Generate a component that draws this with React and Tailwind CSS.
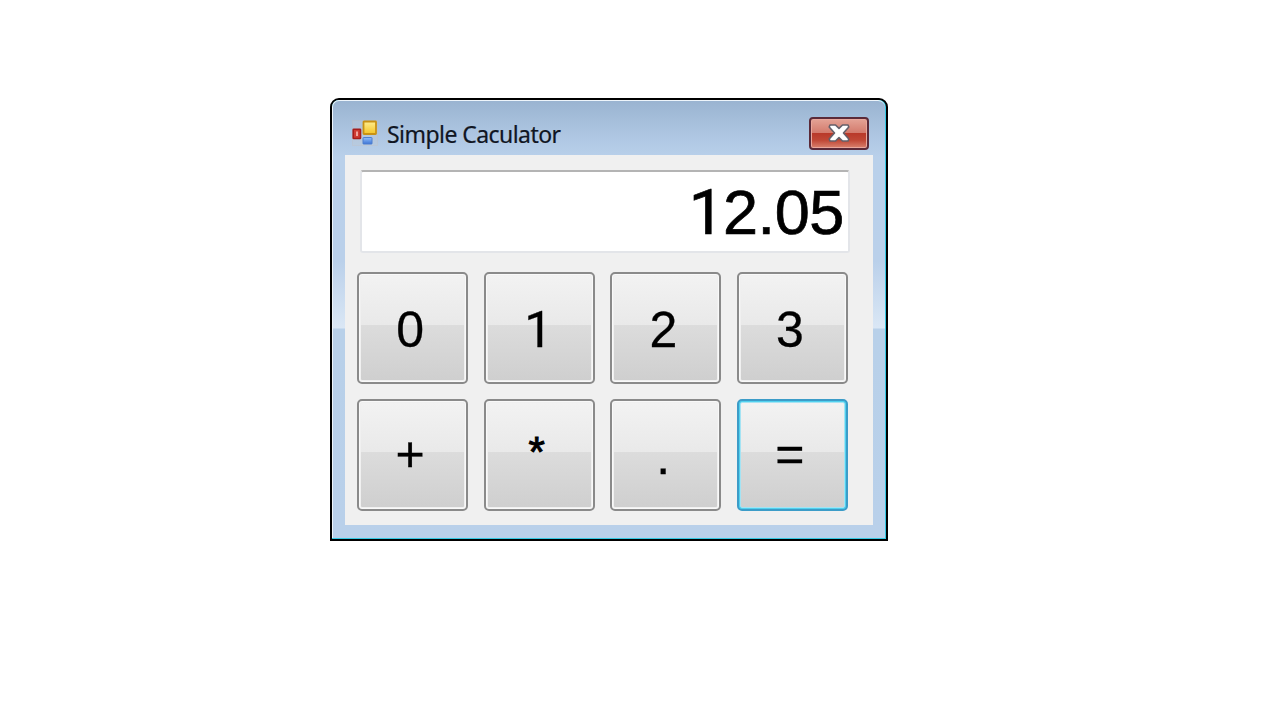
const ARIAL = "font-['Liberation_Sans',Arial,sans-serif]";

function Digits({ value }) {
  return value.split("").map((c, i) =>
    c === "1" ? (
      <span key={i} className="pl-[2px] font-[Roboto,sans-serif] leading-none tracking-[-0.02em]">{c}</span>
    ) : (
      <span key={i}>{c}</span>
    )
  );
}

const NUDGE = {
  "+": "pb-[3px] pt-0",
  "=": "pb-[3px] pt-0",
  ".": "pb-0 pt-[3px]",
  "*": "pb-[6px] pt-0",
};

function Key({ label, focused = false }) {
  return (
    <button
      className={
        "h-[112px] rounded-[5px] border-2 p-px " +
        (focused
          ? "border-[#3c9cc8] bg-[#50d0ee]"
          : "border-[#8a8a8a] bg-[#f9f9f9]")
      }
    >
      <span
        className={
          "flex h-full w-full items-center justify-center rounded-[2px] border pr-[5px] leading-none text-black bg-[linear-gradient(to_bottom,#f2f2f2_0%,#e9e9e9_47%,#dcdcdc_47%,#cfcfcf_100%)] " +
          (label === "*"
            ? "text-[42px] [-webkit-text-stroke:1px_black] "
            : "text-[50px] [-webkit-text-stroke:0.3px_black] ") +
          (NUDGE[label] || "pt-[3px]") +
          (focused ? " border-[#a5e3f3] " : " border-[#f0f0f0] ") +
          ARIAL
        }
      >
        <Digits value={label} />
      </span>
    </button>
  );
}

function AppIcon() {
  return (
    <svg width="26" height="26" viewBox="0 0 26 26" className="shrink-0">
      <defs>
        <linearGradient id="yellow" x2="0" y2="1">
          <stop stopColor="#ffee90" />
          <stop offset="1" stopColor="#f4c425" />
        </linearGradient>
        <linearGradient id="blue" x2="0" y2="1">
          <stop stopColor="#91bffa" />
          <stop offset="1" stopColor="#3d74d6" />
        </linearGradient>
      </defs>
      <rect x=".5" y=".5" width="25" height="25" fill="#c5cad0" opacity=".3" stroke="#cbbfb5" />
      <rect x="1.2" y="9.2" width="7.3" height="9.3" rx=".5" fill="#cf3a32" stroke="#a51d1b" strokeWidth="1.6" />
      <rect x="4" y="11.5" width="2" height="4.5" fill="#f2a39a" />
      <rect x="11.5" y="1.5" width="12.5" height="12.5" rx=".5" fill="url(#yellow)" stroke="#c99214" strokeWidth="1.8" />
      <rect x="11" y="17.5" width="9" height="6.5" rx=".5" fill="url(#blue)" stroke="#4e7fce" />
    </svg>
  );
}

function CloseButton() {
  return (
    <button className="h-[33px] w-[60px] rounded-[4px] border-2 border-[#5b2a38] bg-[#e9a79c] p-px">
      <span className="flex h-full w-full items-center justify-center rounded-[1px] bg-[linear-gradient(to_bottom,#e3a093_0%,#d37a6c_48%,#b9392a_50%,#c04836_75%,#d67a67_100%)]">
        <svg width="22" height="18" viewBox="0 0 22 18">
          <path
            d="M2 1h5.500L11 4.300 14.500 1H20l.8 2L15.500 9l5.300 6-.8 2h-5.500L11 13.700 7.500 17H2l-.8-2L6.500 9 1.200 3z"
            fill="#fff"
            stroke="#65606a"
            strokeWidth="1.6"
            strokeLinejoin="round"
          />
        </svg>
      </span>
    </button>
  );
}

export default function App() {
  return (
    <main className="h-[720px] w-[1280px] overflow-hidden bg-white pl-[330px] pt-[98px]">
      <section className="h-[443px] w-[558px] rounded-t-[9px] border-2 border-black bg-[#35c9e4]">
        <div className="h-[438px] w-[553px] rounded-t-[7px] border-l border-t border-[#eef5fb] bg-[linear-gradient(to_bottom,#9ab4d1_0px,#b0c8e4_38px,#b9d0ea_56px,#bad0ea_160px,#dae7f5_227px,#b8d0e9_228px,#b9d0ea_100%)] pl-[12px] pr-[12px]">
          <header className="flex h-[54px] items-center pl-[7px] pr-[4px] pt-[10px]">
            <AppIcon />
            <h1 className="ml-[9px] mt-px whitespace-nowrap font-['Noto_Sans',sans-serif] text-[23px] leading-[30px] tracking-[-0.55px] text-[#101522] [-webkit-text-stroke:0.2px_#101522]">
              Simple Caculator
            </h1>
            <div className="ml-auto flex">
              <CloseButton />
            </div>
          </header>
          <div className="h-[370px] w-[528px] bg-[#f0f0f0] pl-[12px] pt-[15px]">
            <output
              className={
                "ml-[3px] flex h-[83px] w-[490px] items-center justify-end rounded-[3px] border-2 border-[#e3e5e9] border-t-[#b4b4b4] bg-white pr-[4px] pt-[2px] text-[63px] leading-none tracking-[-0.4px] text-black [-webkit-text-stroke:0.7px_black] " +
                ARIAL
              }
            >
              <Digits value="12.05" />
            </output>
            <div className="mt-[19px] grid w-[491px] grid-cols-4 gap-x-[15.4px] gap-y-[15px]">
              {["0", "1", "2", "3", "+", "*", ".", "="].map((label) => (
                <Key key={label} label={label} focused={label === "="} />
              ))}
            </div>
          </div>
        </div>
      </section>
    </main>
  );
}
